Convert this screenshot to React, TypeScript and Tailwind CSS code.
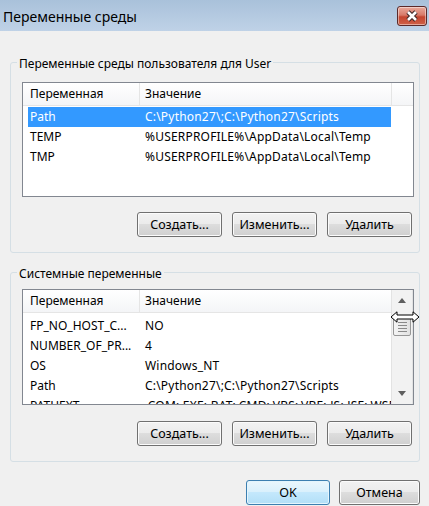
const userRows = [
  { name: "Path", value: "C:\\Python27\\;C:\\Python27\\Scripts", selected: true },
  { name: "TEMP", value: "%USERPROFILE%\\AppData\\Local\\Temp", selected: false },
  { name: "TMP", value: "%USERPROFILE%\\AppData\\Local\\Temp", selected: false },
];

const systemRows = [
  { name: "FP_NO_HOST_C...", value: "NO", selected: false },
  { name: "NUMBER_OF_PR...", value: "4", selected: false },
  { name: "OS", value: "Windows_NT", selected: false },
  { name: "Path", value: "C:\\Python27\\;C:\\Python27\\Scripts", selected: false },
  { name: "PATHEXT", value: ".COM;.EXE;.BAT;.CMD;.VBS;.VBE;.JS;.JSE;.WSF", selected: false },
];

type Row = { name: string; value: string; selected: boolean };

function Header({ extra }: { extra: boolean }) {
  return (
    <div className="flex h-[23px] shrink-0 border-b border-[#e5e5e5] bg-[linear-gradient(#ffffff,#f4f5f7)]">
      <div className="flex w-[117px] items-center border-r border-[#e5e5e5] pl-[7px]">Переменная</div>
      <div className={extra ? "flex w-[252px] items-center border-r border-[#e5e5e5] pl-[5px]" : "flex flex-1 items-center pl-[5px]"}>
        Значение
      </div>
      {extra && <div className="flex-1" />}
    </div>
  );
}

function Rows({ rows }: { rows: Row[] }) {
  return (
    <div className="flex flex-col">
      {rows.map((r) => (
        <div
          key={r.name}
          className={
            r.selected
              ? "ml-[5px] flex h-[20px] w-[363px] shrink-0 items-center bg-[#3399ff] text-white"
              : "ml-[5px] flex h-[20px] w-[363px] shrink-0 items-center"
          }
        >
          <span className="w-[117px] shrink-0 whitespace-nowrap pl-[2px]">{r.name}</span>
          <span className="whitespace-nowrap tracking-[0.2px]">{r.value}</span>
        </div>
      ))}
    </div>
  );
}

function Scrollbar() {
  return (
    <div className="flex w-[22px] shrink-0 flex-col border-x border-[#e3e3e3] bg-[#f2f2f2]">
      <div className="flex h-[20px] shrink-0 items-center justify-center">
        <svg width="8" height="5" viewBox="0 0 8 5">
          <path d="M0 5 L4 0 L8 5 Z" fill="#5f5f5f" />
        </svg>
      </div>
      <div className="mx-[1px] mt-[7px] flex h-[19px] shrink-0 flex-col items-center justify-center gap-[2px] rounded-[2px] border border-[#979797] bg-[linear-gradient(90deg,#f4f4f4,#e2e2e2)]">
        <div className="h-px w-[9px] bg-[#8a8a8a]" />
        <div className="h-px w-[9px] bg-[#8a8a8a]" />
        <div className="h-px w-[9px] bg-[#8a8a8a]" />
        <div className="h-px w-[9px] bg-[#8a8a8a]" />
      </div>
      <div className="flex-1" />
      <div className="flex h-[20px] shrink-0 items-center justify-center pb-[1px]">
        <svg width="8" height="5" viewBox="0 0 8 5">
          <path d="M0 0 L8 0 L4 5 Z" fill="#5f5f5f" />
        </svg>
      </div>
    </div>
  );
}

function Btn({ children, primary, w }: { children: string; primary?: boolean; w: string }) {
  return (
    <button
      className={
        primary
          ? `${w} h-[25px] rounded-[3px] border border-[#3c7fb1] bg-[linear-gradient(#eaf6fd_0%,#d9f0fc_49%,#c4e8fc_50%,#b2dff7_100%)] shadow-[inset_0_0_0_1px_#e4f5fd] text-[12.5px] text-black`
          : `${w} h-[25px] rounded-[3px] border border-[#707070] bg-[linear-gradient(#f2f2f2_0%,#ebebeb_49%,#dddddd_50%,#cfcfcf_100%)] shadow-[inset_0_0_0_1px_#fbfbfb] text-[12.5px] text-black`
      }
    >
      {children}
    </button>
  );
}

function ButtonRow() {
  return (
    <div className="flex justify-end gap-[10px] pr-[2px]">
      <Btn w="w-[85px]">Создать...</Btn>
      <Btn w="w-[85px]">Изменить...</Btn>
      <Btn w="w-[85px]">Удалить</Btn>
    </div>
  );
}

export default function App() {
  return (
    <div className="relative flex h-[506px] w-[429px] flex-col overflow-hidden bg-[#f0f0f0] font-['Noto_Sans',sans-serif] text-[12px] leading-[16px] text-black">
      {/* title bar */}
      <div className="flex h-[31px] shrink-0 items-start bg-[linear-gradient(#a9c1da,#bfd2e7)]">
        <div className="pl-[3px] pt-[7px] text-[14px] leading-[20px] text-black">Переменные среды</div>
        <div className="ml-auto mr-[2px] mt-[6px] flex h-[20px] w-[30px] items-center justify-center rounded-[3px] border border-[#5b2a2a] bg-[linear-gradient(#e9aa9c_0%,#d87a69_45%,#c4452f_55%,#cf6148_100%)] shadow-[inset_0_0_0_1px_rgba(255,255,255,0.45)]">
          <svg width="14" height="12" viewBox="0 0 14 12">
            <path d="M3 2 L11 10 M11 2 L3 10" stroke="#3b2525" strokeWidth="4.6" />
            <path d="M3 2 L11 10 M11 2 L3 10" stroke="#ffffff" strokeWidth="2.6" />
          </svg>
        </div>
      </div>

      {/* user variables */}
      <fieldset className="mx-[10px] mt-[21px] rounded-[3px] border border-[#d5dfe5] pb-[15px] pl-[11px] pr-[5px] pt-[10px]">
        <legend className="ml-[-5px] px-[2px] pt-[4px] leading-[16px]">Переменные среды пользователя для User</legend>
        <div className="flex h-[115px] w-[392px] flex-col overflow-hidden border border-[#828790] bg-white">
          <Header extra />
          <div className="pt-[1px]">
            <Rows rows={userRows} />
          </div>
        </div>
        <div className="mt-[15px]">
          <ButtonRow />
        </div>
      </fieldset>

      {/* system variables */}
      <fieldset className="mx-[10px] mt-[9px] rounded-[3px] border border-[#d5dfe5] pb-[15px] pl-[11px] pr-[5px] pt-[7px]">
        <legend className="ml-[-5px] px-[2px] pt-[4px] leading-[16px]">Системные переменные</legend>
        <div className="flex h-[116px] w-[392px] overflow-hidden border border-[#828790] bg-white">
          <div className="flex w-[368px] flex-col overflow-hidden">
            <Header extra={false} />
            <div className="pt-[3px]">
              <Rows rows={systemRows} />
            </div>
          </div>
          <Scrollbar />
        </div>
        <div className="mt-[16px]">
          <ButtonRow />
        </div>
      </fieldset>

      {/* dialog buttons */}
      <div className="mt-[18px] flex justify-end gap-[9px] pr-[9px]">
        <Btn primary w="w-[84px]">OK</Btn>
        <Btn w="w-[81px]">Отмена</Btn>
      </div>

      {/* resize cursor over the column divider */}
      <svg className="pointer-events-none absolute left-[390px] top-[311px]" width="30" height="12" viewBox="0 0 30 12">
        <path d="M1 6 L7 0.8 L7 4 L23 4 L23 0.8 L29 6 L23 11.2 L23 8 L7 8 L7 11.2 Z" fill="#ffffff" stroke="#000000" strokeWidth="1" />
      </svg>
    </div>
  );
}
